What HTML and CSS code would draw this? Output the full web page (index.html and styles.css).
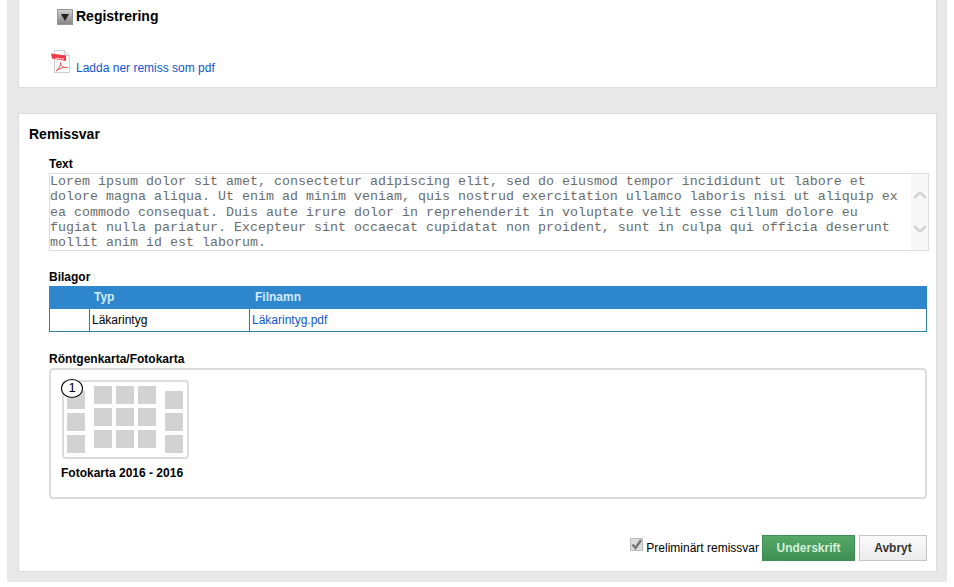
FILE: index.html
```html
<!DOCTYPE html>
<html lang="en">
<head>
	<meta charset="UTF-8">
	<title>Remissvar</title>
	<link rel="stylesheet" href="styles.css">
</head>
<body>
<div class="page">
	<div class="panel panel-top">
		<div class="toggle-row">
			<span class="toggle"><svg width="8" height="8" viewBox="0 0 8 8"><path d="M0 1h8L4 8z" fill="#222"/></svg></span>
			<span class="toggle-title">Registrering</span>
		</div>
		<div class="pdf-row">
			<svg class="pdf-icon" width="19" height="23" viewBox="0 0 19 23">
				<path d="M3.500 .5h10l5 5v17h-15z" fill="#fbfbfb" stroke="#cfcfcf"/>
				<path d="M13.500 .5v5h5" fill="#ececec" stroke="#cfcfcf"/>
				<path d="M0 3.500l15 2v5.500L1 8.500z" fill="#ec3a44"/>
				<path d="M4 8l9 1.200" stroke="#fbc4c8" stroke-width="1.200"/>
				<path d="M5 21c3-2 4.500-5 4.500-8.500 0 3 2.500 5.500 7 5-4-.5-8 .5-11.500 3.500z" fill="none" stroke="#e0545a"/>
			</svg>
			<a class="link pdf-link" href="#">Ladda ner remiss som pdf</a>
		</div>
	</div>

	<div class="panel panel-answer">
		<h2 class="answer-title">Remissvar</h2>
		<div class="answer-body">
			<div class="label label-text">Text</div>
			<div class="textbox">
				<div class="textbox-lines">
					Lorem ipsum dolor sit amet, consectetur adipiscing elit, sed do eiusmod tempor incididunt ut labore et<br>
					dolore magna aliqua. Ut enim ad minim veniam, quis nostrud exercitation ullamco laboris nisi ut aliquip ex<br>
					ea commodo consequat. Duis aute irure dolor in reprehenderit in voluptate velit esse cillum dolore eu<br>
					fugiat nulla pariatur. Excepteur sint occaecat cupidatat non proident, sunt in culpa qui officia deserunt<br>
					mollit anim id est laborum.
				</div>
				<div class="scrollbar">
					<svg width="14" height="8" viewBox="0 0 14 8"><path d="M1 7l6-5.500 6 5.500" fill="none" stroke="#d0d0d0" stroke-width="2.400"/></svg>
					<svg width="14" height="8" viewBox="0 0 14 8"><path d="M1 1l6 5.500 6-5.500" fill="none" stroke="#d0d0d0" stroke-width="2.400"/></svg>
				</div>
			</div>

			<div class="label label-files">Bilagor</div>
			<div class="files">
				<div class="files-head">
					<div class="col-blank"></div>
					<div class="col-type">Typ</div>
					<div class="col-name">Filnamn</div>
				</div>
				<div class="files-row">
					<div class="col-blank"></div>
					<div class="col-type">Läkarintyg</div>
					<div class="col-name"><a class="link" href="#">Läkarintyg.pdf</a></div>
				</div>
			</div>

			<div class="label label-map">Röntgenkarta/Fotokarta</div>
			<div class="mapbox">
				<div class="map-card">
					<span class="map-badge">1</span>
					<div class="tiles tiles-side">
						<i></i><i></i><i></i>
					</div>
					<div class="tiles-mid">
						<i></i><i></i><i></i><i></i><i></i><i></i><i></i><i></i><i></i>
					</div>
					<div class="tiles tiles-side">
						<i></i><i></i><i></i>
					</div>
				</div>
				<div class="map-title">Fotokarta 2016 - 2016</div>
			</div>

			<div class="actions">
				<span class="check"><svg width="13" height="13" viewBox="0 0 13 13"><path d="M2.500 6.500l3 3.500 5.500-8" fill="none" stroke="#777" stroke-width="2.400"/></svg></span>
				<span class="check-label">Preliminärt remissvar</span>
				<button class="btn btn-sign">Underskrift</button>
				<button class="btn btn-cancel">Avbryt</button>
			</div>
		</div>
	</div>
</div>
</body>
</html>
```
FILE: styles.css
```css
*{
	box-sizing: border-box;
}
body{
	margin: 0;
	background: #fff;
	font-family: "Liberation Sans", Arial, sans-serif;
	font-size: 12px;
	color: #000;
}
.page{
	width: 940px;
	margin-left: 7px;
	padding: 0 10px 10px 11px;
	background: #e8e8e8;
}
.panel{
	background: #fff;
	border: 1px solid #dcdcdc;
}
.panel-top{
	height: 88px;
	border-top: 0;
	padding: 9px 0 0 31px;
}
.toggle-row{
	display: flex;
	align-items: center;
	margin-left: 7px;
	height: 16px;
}
.toggle{
	display: flex;
	align-items: center;
	justify-content: center;
	width: 16px;
	height: 16px;
	margin-right: 3px;
	background: linear-gradient(#cfcfcf, #858585);
	border: 1px solid #969696;
}
.toggle-title{
	margin-top: -2px;
	font-size: 14px;
	font-weight: bold;
}
.pdf-row{
	display: flex;
	align-items: flex-start;
	margin: 25px 0 0 1px;
}
.pdf-icon{
	margin-right: 6px;
}
.pdf-link{
	margin-top: 11px;
}
.link{
	color: #1155cc;
	text-decoration: none;
}
.panel-answer{
	margin-top: 25px;
	height: 459px;
	padding: 12px 0 0 10px;
}
.answer-title{
	margin: 0;
	font-size: 14px;
	line-height: 16px;
	font-weight: bold;
}
.answer-body{
	padding-left: 20px;
}
.label{
	font-weight: bold;
	line-height: 14px;
}
.label-text{
	margin-top: 15px;
}
.textbox{
	display: flex;
	justify-content: space-between;
	width: 880px;
	height: 78px;
	margin-top: 2px;
	border: 1px solid #dcdcdc;
	font-family: "Liberation Mono", "Courier New", monospace;
	font-size: 13.33px;
	line-height: 15.25px;
	color: #6c6c6c;
	white-space: nowrap;
}
.scrollbar{
	display: flex;
	flex-direction: column;
	justify-content: space-between;
	align-items: center;
	width: 17px;
	height: 100%;
	padding: 17px 0 17px;
	background: #f7f7f7;
}
.label-files{
	margin-top: 19px;
}
.files{
	width: 878px;
	margin-top: 2px;
}
.files-head,.files-row{
	display: flex;
}
.files-head{
	height: 23px;
	line-height: 22px;
	background: #2e86cd;
	color: #d4ecff;
	font-weight: bold;
}
.files-row{
	height: 23px;
	line-height: 22px;
	border: 1px solid #2a7fa8;
	border-top: 0;
}
.col-blank{
	width: 41px;
	flex: none;
}
.col-type{
	width: 160px;
	flex: none;
}
.files-head .col-type{
	padding-left: 4px;
}
.files-head .col-name{
	padding-left: 5px;
}
.files-row .col-blank{
	width: 40px;
	border-right: 1px solid #2a7fa8;
}
.files-row .col-type{
	padding-left: 2px;
	border-right: 1px solid #2a7fa8;
}
.files-row .col-name{
	padding-left: 2px;
}
.label-map{
	margin-top: 20px;
}
.mapbox{
	width: 878px;
	height: 131px;
	margin-top: 2px;
	padding: 10px 0 0 10px;
	border: 2px solid #dcdcdc;
	border-radius: 4px;
}
.map-card{
	position: relative;
	display: flex;
	gap: 9px;
	width: 127px;
	height: 79px;
	margin-left: 1px;
	padding: 0 3px;
	border: 2px solid #dcdcdc;
	border-radius: 4px;
}
.map-card i{
	display: block;
	width: 18px;
	height: 18px;
	background: #d2d2d2;
}
.tiles{
	display: flex;
	flex-direction: column;
	gap: 4px;
	padding-top: 9px;
}
.tiles-mid{
	display: grid;
	grid-template-columns: repeat(3, 18px);
	gap: 4px;
	align-content: start;
	padding-top: 4px;
}
.map-badge{
	position: absolute;
	left: -3px;
	top: -3px;
	width: 22px;
	height: 19px;
	border: 1px solid #000;
	border-radius: 50%;
	background: #fff;
	text-align: center;
	font-size: 13px;
	line-height: 16px;
}
.map-title{
	margin-top: 6px;
	font-weight: bold;
	line-height: 16px;
}
.actions{
	display: flex;
	align-items: center;
	justify-content: flex-end;
	width: 878px;
	margin-top: 36px;
}
.check{
	display: flex;
	width: 13px;
	height: 13px;
	margin: -7px 3px 0 0;
	background: #dcdcdc;
	border: 1px solid #bcbcbc;
}
.check svg{
	margin: -1px;
	flex: none;
}
.check-label{
	margin-right: 3px;
}
.btn{
	height: 26px;
	padding: 0;
	font-family: inherit;
	font-size: 12px;
	font-weight: bold;
}
.btn-sign{
	width: 93px;
	margin-right: 4px;
	background: linear-gradient(#55a868, #3f8f55);
	border: 1px solid #3f8f55;
	color: #d4f0d8;
}
.btn-cancel{
	width: 68px;
	background: linear-gradient(#fafafa, #ececec);
	border: 1px solid #c4c4c4;
	color: #333;
}
```
